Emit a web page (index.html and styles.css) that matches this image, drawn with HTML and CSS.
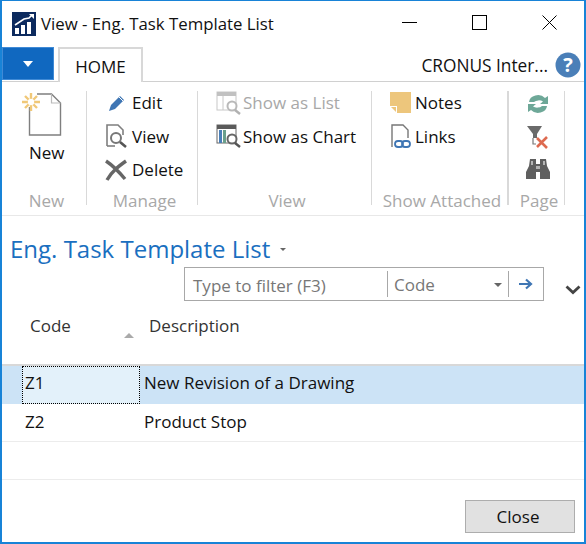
FILE: index.html
```html
<!DOCTYPE html>
<html>
  <head>
    <meta charset="utf-8">
    <title>View - Eng. Task Template List</title>
    <link rel="stylesheet" href="styles.css">
  </head>
  <body>
    <div class="window">
      <div class="titlebar">
        <svg class="logo" width="24" height="24" viewBox="0 0 24 24">
          <rect width="24" height="24" fill="#0c2a5e"/>
          <path d="M3 22v-6h4v6zM9 22v-9h4v9zM15 22v-12h4v12z" fill="#fff"/>
          <path d="M3 13l9-6 5-1 3-3" stroke="#fff" stroke-width="1.6" fill="none"/>
          <path d="M17 2h5v5z" fill="#fff"/>
        </svg>
        <span class="title">View - Eng. Task Template List</span>
        <div class="controls">
          <svg width="16" height="16" viewBox="0 0 16 16"><path d="M0 7.5h15" stroke="#000"/></svg>
          <svg width="16" height="16" viewBox="0 0 16 16"><rect x=".5" y=".5" width="14" height="14" fill="none" stroke="#000"/></svg>
          <svg width="16" height="16" viewBox="0 0 16 16"><path d="M.5.5l14 14M14.5.5l-14 14" stroke="#000" fill="none"/></svg>
        </div>
      </div>

      <div class="tabs">
        <button class="app-btn"><span class="app-arrow"></span></button>
        <div class="tab">HOME</div>
        <span class="company">CRONUS Inter...</span>
        <svg class="help" width="26" height="26" viewBox="0 0 26 26">
          <circle cx="13" cy="13" r="12.5" fill="#4a7fb8"/>
          <text x="13" y="20" text-anchor="middle" class="help-mark">?</text>
        </svg>
      </div>

      <div class="ribbon">
        <div class="group group-new">
          <div class="group-body big-body">
            <svg width="40" height="44" viewBox="0 0 40 44">
              <path d="M7.5 14v28h31V10l-9-9H15" fill="#fff" stroke="#7f7f7f" stroke-width="1.4"/>
              <path d="M29.5 1v9h9" fill="none" stroke="#bbb" stroke-width="1.2"/>
              <g stroke="#f0c878" stroke-width="2.4">
                <path d="M9 0v18M0 9h18M3 3l12 12M15 3L3 15"/>
              </g>
              <circle cx="9" cy="9" r="3.200" fill="#fff"/>
            </svg>
            <span class="big-label">New</span>
          </div>
          <div class="group-label">New</div>
        </div>

        <div class="group group-manage">
          <div class="group-body">
            <div class="item">
              <svg width="24" height="24" viewBox="0 0 24 24">
                <path d="M5 20l2-6L16 5l4 4-9 9z" fill="#3f76b4"/>
                <path d="M15 6l4 4" stroke="#fff" stroke-width="1"/>
              </svg>
              Edit
            </div>
            <div class="item">
              <svg width="24" height="26" viewBox="0 0 24 26">
                <path d="M3 23V2h11l5 5v5" fill="none" stroke="#7f7f7f" stroke-width="1.600"/>
                <path d="M3 23h8" stroke="#7f7f7f" stroke-width="1.600"/>
                <circle cx="12" cy="15" r="5" fill="#fff" stroke="#777" stroke-width="2"/>
                <path d="M16 19l6 5" stroke="#555" stroke-width="2.600"/>
              </svg>
              View
            </div>
            <div class="item">
              <svg width="24" height="24" viewBox="0 0 24 24">
                <path d="M2 3c6 4 14 12 19 18M22 3C15 8 8 13 3 22" fill="none" stroke="#666" stroke-width="3.400"/>
              </svg>
              Delete
            </div>
          </div>
          <div class="group-label">Manage</div>
        </div>

        <div class="group group-view">
          <div class="group-body">
            <div class="item muted">
              <svg width="26" height="24" viewBox="0 0 26 24" opacity=".45">
                <rect x="1" y="1" width="19" height="18" fill="#fff" stroke="#888"/>
                <rect x="1" y="1" width="19" height="4" fill="#777"/>
                <path d="M7 5v14" stroke="#888"/>
                <circle cx="16" cy="15" r="4.500" fill="#fff" stroke="#666" stroke-width="2"/>
                <path d="M19 19l5 4" stroke="#555" stroke-width="2.400"/>
              </svg>
              Show as List
            </div>
            <div class="item">
              <svg width="26" height="24" viewBox="0 0 26 24">
                <rect x="1" y="1" width="19" height="18" fill="#fff" stroke="#666"/>
                <rect x="1" y="1" width="19" height="4" fill="#5a5a5a"/>
                <rect x="3" y="6" width="3" height="13" fill="#4a7fb8"/>
                <rect x="7" y="6" width="3" height="13" fill="#6aa08c"/>
                <circle cx="16" cy="15" r="4.500" fill="#fff" stroke="#666" stroke-width="2"/>
                <path d="M19 19l5 4" stroke="#555" stroke-width="2.400"/>
              </svg>
              Show as Chart
            </div>
          </div>
          <div class="group-label">View</div>
        </div>

        <div class="group group-attached">
          <div class="group-body">
            <div class="item">
              <svg width="24" height="24" viewBox="0 0 24 24">
                <path d="M2 1h21v21H9l-7-7z" fill="#edc67c"/>
                <path d="M2 15h7v7h-1v-6H2z" fill="#fff"/>
              </svg>
              Notes
            </div>
            <div class="item">
              <svg width="24" height="26" viewBox="0 0 24 26">
                <path d="M4 20V2h11l5 5v8" fill="none" stroke="#777" stroke-width="1.400"/>
                <path d="M4 20v4" stroke="#777" stroke-width="1.400"/>
                <rect x="7" y="18" width="8" height="6" rx="3" fill="none" stroke="#3f76b4" stroke-width="1.800"/>
                <rect x="14" y="18" width="8" height="6" rx="3" fill="none" stroke="#3f76b4" stroke-width="1.800"/>
              </svg>
              Links
            </div>
          </div>
          <div class="group-label">Show Attached</div>
        </div>

        <div class="group group-page">
          <div class="group-body icon-col">
            <svg width="24" height="24" viewBox="0 0 24 24">
              <path d="M3 10a9 7.500 0 0 1 16-4l3-2v8h-8l3-2.500a6 4 0 0 0-9 .5z" fill="#6ea898"/>
              <path d="M21 14a9 7.500 0 0 1-16 4l-3 2v-8h8l-3 2.500a6 4 0 0 0 9-.5z" fill="#6ea898"/>
            </svg>
            <svg width="24" height="24" viewBox="0 0 24 24">
              <path d="M1 1h15l-5 8v4H7V9z" fill="#6a6a6a"/>
              <path d="M7 13v6h3" fill="none" stroke="#777" stroke-width="1.200"/>
              <path d="M11 13l10 10M21 12L11 22" stroke="#dd6a50" stroke-width="2.600"/>
            </svg>
            <svg width="24" height="22" viewBox="0 0 24 22">
              <path d="M4 1h6v5h4V1h6l1 7 3 6v7h-10v-7h-4v7H0v-7l3-6z" fill="#5f5f5f"/>
              <path d="M5 3h2v4H5zM17 3h2v4h-2zM10 8h4v3h-4z" fill="#b5b5b5"/>
            </svg>
          </div>
          <div class="group-label">Page</div>
        </div>
      </div>

      <div class="page-head">
        <h1>Eng. Task Template List</h1>
        <span class="head-arrow"></span>
      </div>

      <div class="filter-row">
        <div class="filter">
          <span class="filter-text">Type to filter (F3)</span>
          <span class="filter-field">Code<span class="field-arrow"></span></span>
          <span class="filter-go">
            <svg width="14" height="12" viewBox="0 0 14 12">
              <path d="M0 6h11M7 1.500l5 4.500-5 4.500" fill="none" stroke="#3f76b4" stroke-width="2.200"/>
            </svg>
          </span>
        </div>
        <svg class="collapse" width="16" height="10" viewBox="0 0 16 10">
          <path d="M1.500 1.500L8 7.500l6.500-6" fill="none" stroke="#444" stroke-width="2.800"/>
        </svg>
      </div>

      <div class="grid-head">
        <div class="col-code">Code<span class="sort-arrow"></span></div>
        <div class="col-desc">Description</div>
      </div>
      <div class="row selected">
        <div class="cell-code">Z1</div>
        <div class="cell-desc">New Revision of a Drawing</div>
      </div>
      <div class="row">
        <div class="cell-code">Z2</div>
        <div class="cell-desc">Product Stop</div>
      </div>
      <div class="row"></div>

      <div class="footer">
        <button class="close-btn">Close</button>
      </div>
    </div>
  </body>
</html>
```

FILE: styles.css
```css
* { box-sizing: border-box; }
html, body {
  margin: 0;
  height: 100%;
}
body {
  font-family: "Open Sans", sans-serif;
  font-size: 17px;
  color: #111;
  background: #fff;
  overflow: hidden;
}
.window {
  height: 544px;
  border: 1px solid #1883d7;
  border-width: 1px 2px 2px 2px;
  display: flex;
  flex-direction: column;
}

/* title bar */
.titlebar {
  height: 46px;
  display: flex;
  align-items: center;
  padding: 0 0 1px 10px;
}
.logo { margin-right: 5px; }
.title {
  font-size: 16.8px;
  flex: 1;
}
.controls {
  display: flex;
  gap: 54px;
  padding-right: 26px;
  margin-top: -2px;
}

/* tabs */
.tabs {
  height: 35px;
  display: flex;
  align-items: flex-end;
  border-bottom: 1px solid #d0d0d0;
  position: relative;
}
.app-btn {
  width: 52px;
  height: 33px;
  margin: 0 4px 1px 0;
  background: #1068c0;
  border: 1px solid #3f8ad6;
  padding: 0;
  display: flex;
  align-items: center;
  justify-content: center;
}
.app-arrow {
  width: 0;
  height: 0;
  border-left: 5px solid transparent;
  border-right: 5px solid transparent;
  border-top: 6px solid #fff;
}
.tab {
  width: 85px;
  height: 35px;
  margin-bottom: -1px;
  border: 2px solid #d8d8d8;
  border-bottom: 0;
  background: #fff;
  text-align: center;
  line-height: 35px;
}
.company {
  margin-left: auto;
  margin-right: 7px;
  line-height: 30px;
  font-size: 17.3px;
}
.help {
  margin-right: 3px;
  margin-bottom: 3px;
}
.help-mark {
  font-family: "Open Sans", sans-serif;
  font-size: 20px;
  font-weight: 700;
  fill: #fff;
}

/* ribbon */
.ribbon {
  height: 134px;
  display: flex;
  border-bottom: 1px solid #e8e8e8;
  padding-top: 9px;
}
.group {
  display: flex;
  flex-direction: column;
  height: 114px;
  border-right: 1px solid #d9d9d9;
}
.group-new { width: 85px; }
.group-manage { width: 111px; }
.group-view { width: 174px; }
.group-attached { width: 137px; border-right-width: 2px; }
.group-page { width: 56px; }
.group-body {
  flex: 1;
  min-height: 0;
  display: flex;
  flex-direction: column;
  padding-top: 1px;
}
.group-label {
  text-align: center;
  color: #a8a8a8;
  line-height: 20px;
  height: 18px;
  margin-bottom: -4px;
  padding-left: 5px;
  white-space: nowrap;
}
.big-body {
  align-items: flex-start;
  padding: 2px 0 0 20px;
}
.big-label {
  margin: 5px 0 0 7px;
  line-height: 22px;
}
.item {
  display: flex;
  align-items: center;
  flex: none;
  gap: 4px;
  height: 33.500px;
  white-space: nowrap;
}
.group-manage .group-body,
.group-view .group-body,
.group-attached .group-body { margin-top: -6px; }
.group-manage .group-body { padding-left: 17px; }
.group-view .group-body { padding-left: 18px; }
.group-view .item { gap: 1px; }
.group-attached .group-body { padding-left: 16px; }
.group-attached .item { gap: 3px; }
.muted { color: #a8a8a8; }
.icon-col {
  gap: 9px;
  padding-left: 17px;
}

/* page header */
.page-head {
  height: 51px;
  display: flex;
  align-items: center;
  padding: 13px 0 0 8px;
}
h1 {
  margin: 0;
  font-weight: 400;
  font-size: 24px;
  color: #1a6fc0;
}
.head-arrow {
  margin: 2px 0 0 10px;
  border-left: 3px solid transparent;
  border-right: 3px solid transparent;
  border-top: 3px solid #666;
}

/* filter */
.filter-row {
  height: 34px;
  display: flex;
  align-items: center;
  padding-left: 182px;
}
.filter {
  width: 360px;
  height: 34px;
  border: 1px solid #a8a8a8;
  display: flex;
  align-items: center;
  color: #777;
}
.filter-text {
  width: 202px;
  padding: 2px 0 0 8px;
  white-space: nowrap;
}
.filter-field {
  width: 122px;
  height: 26px;
  padding: 1px 6px 0 6px;
  border-left: 1px solid #a8a8a8;
  border-right: 1px solid #a8a8a8;
  display: flex;
  align-items: center;
  justify-content: space-between;
}
.field-arrow {
  border-left: 4px solid transparent;
  border-right: 4px solid transparent;
  border-top: 4px solid #666;
}
.filter-go {
  flex: 1;
  display: flex;
  justify-content: center;
}
.collapse {
  margin: 12px 0 0 21px;
}

/* grid */
.grid-head {
  height: 65px;
  display: flex;
  border-bottom: 2px solid #d8d8d8;
  padding-top: 13px;
  color: #333;
}
.col-code {
  width: 139px;
  padding-left: 28px;
  position: relative;
}
.sort-arrow {
  position: absolute;
  left: 122px;
  top: 19px;
  border-left: 5px solid transparent;
  border-right: 5px solid transparent;
  border-bottom: 5px solid #aaa;
}
.col-desc { padding-left: 8px; }
.row {
  height: 38px;
  display: flex;
  align-items: center;
  border-bottom: 1px solid #ececec;
}
.row.selected {
  background: #cce3f6;
  border-bottom: 0;
}
.cell-code {
  width: 139px;
  height: 100%;
  padding: 0 0 3px 23px;
  display: flex;
  align-items: center;
}
.selected .cell-code {
  background: #e3f1fa;
  border: 1px dotted #000;
  padding: 0 0 5px 2px;
  margin-left: 20px;
  width: 118px;
  margin-right: 1px;
}
.cell-desc {
  padding: 0 0 3px 3px;
}
.selected .cell-desc { padding-bottom: 5px; }

/* footer */
.footer {
  flex: 1;
  display: flex;
  justify-content: flex-end;
  align-items: flex-end;
  padding: 0 9px 9px 0;
}
.close-btn {
  width: 110px;
  height: 33px;
  background: #e1e1e1;
  border: 1px solid #adadad;
  font-family: inherit;
  font-size: 17px;
  color: #111;
  padding: 0 4px 0 0;
}
```
